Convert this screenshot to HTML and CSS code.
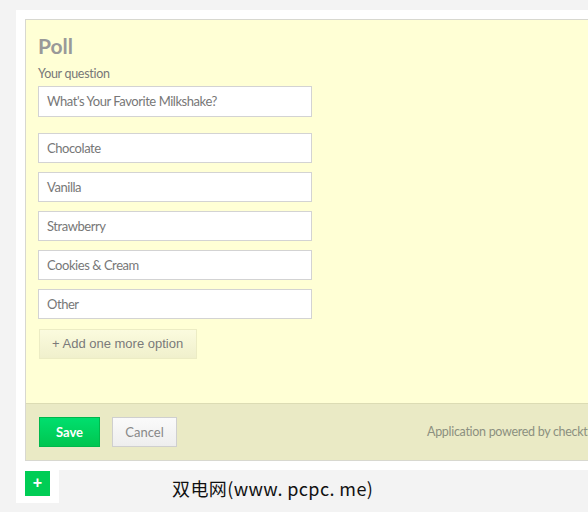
FILE: index.html
```html
<!DOCTYPE html>
<html>
<head>
<meta charset="utf-8">
<link rel="stylesheet" href="styles.css">
</head>
<body>
<div class="page">
  <div class="panel">
    <div class="poll">
      <div class="poll-body">
        <h1 class="title">Poll</h1>
        <div class="label">Your question</div>
        <div class="field question">What's Your Favorite Milkshake?</div>
        <div class="options">
          <div class="field">Chocolate</div>
          <div class="field">Vanilla</div>
          <div class="field">Strawberry</div>
          <div class="field">Cookies &amp; Cream</div>
          <div class="field">Other</div>
        </div>
        <div class="add-btn">+ Add one more option</div>
      </div>
      <div class="poll-footer">
        <div class="btn save">Save</div>
        <div class="btn cancel">Cancel</div>
        <div class="powered">Application powered by checkthem.com</div>
      </div>
    </div>
  </div>
  <div class="bottom">
    <div class="plus-tab"><div class="plus">+</div></div>
    <div class="watermark">双电网(www.&nbsp;pcpc.&nbsp;me)</div>
  </div>
</div>
</body>
</html>
```
FILE: styles.css
```css
html, body {
  margin: 0;
  padding: 0;
  background: #f3f3f3;
  overflow: hidden;
  width: 588px;
  height: 512px;
}
.page {
  padding: 10px 0 0 16px;
  font-family: Lato, "Liberation Sans", sans-serif;
}
.panel {
  background: #fff;
  width: 700px;
  padding: 9px 0 9px 9px;
}
.poll {
  border: 1px solid #d8d8d0;
  background: #ffffd5;
}
.poll-body {
  padding: 14px 0 0 12px;
  height: 383px;
  box-sizing: border-box;
}
.title {
  margin: 0;
  font-size: 21px;
  line-height: 24px;
  font-weight: 700;
  color: #999;
}
.label {
  margin-top: 9px;
  font-size: 12.5px;
  line-height: 14px;
  color: #777;
  letter-spacing: -0.3px;
}
.field {
  box-sizing: border-box;
  width: 274px;
  height: 30px;
  border: 1px solid #d3d3d3;
  background: #fff;
  padding-left: 8px;
  font-size: 13px;
  line-height: 28px;
  color: #777;
  letter-spacing: -0.45px;
}
.question {
  margin-top: 5px;
  height: 31px;
  line-height: 29px;
}
.options {
  margin-top: 16px;
  display: flex;
  flex-direction: column;
  gap: 9px;
}
.add-btn {
  margin-top: 10px;
  display: inline-block;
  box-sizing: border-box;
  height: 30px;
  width: 158px;
  margin-left: 1px;
  border: 1px solid #ececc4;
  background: linear-gradient(#fbfbde, #f0f0cc);
  font-family: "Liberation Sans", Arial, sans-serif;
  font-size: 13px;
  line-height: 28px;
  color: #7a7a7a;
  padding-left: 12px;
}
.poll-footer {
  border-top: 1px solid #dcdcb4;
  background: #eaeac5;
  height: 57px;
  box-sizing: border-box;
  padding: 13px 0 0 13px;
  display: flex;
  align-items: flex-start;
}
.btn {
  box-sizing: border-box;
  height: 30px;
  font-size: 13px;
  line-height: 28px;
  text-align: center;
}
.save {
  width: 61px;
  background: linear-gradient(#00df6e, #00c650);
  border: 1px solid #00b84c;
  color: #fff;
  font-weight: 700;
}
.cancel {
  width: 65px;
  margin-left: 12px;
  background: linear-gradient(#fafafa, #eeeeee);
  border: 1px solid #cfcfcf;
  color: #888;
}
.powered {
  margin-left: 250px;
  font-size: 12.5px;
  line-height: 30px;
  color: #8c9080;
  white-space: nowrap;
  letter-spacing: -0.3px;
}
.bottom {
  display: flex;
  align-items: flex-start;
}
.plus-tab {
  background: #fff;
  padding: 1px 9px 7px 9px;
}
.plus {
  width: 25px;
  height: 25px;
  background: #00cd55;
  color: #fff;
  font-family: "Liberation Sans", Arial, sans-serif;
  font-weight: 700;
  font-size: 16px;
  line-height: 24px;
  text-align: center;
}
.watermark {
  margin-left: 113px;
  margin-top: 7px;
  font-family: "Noto Sans CJK SC", sans-serif;
  font-size: 18px;
  line-height: 22px;
  color: #111;
  letter-spacing: 0.4px;
}
```
